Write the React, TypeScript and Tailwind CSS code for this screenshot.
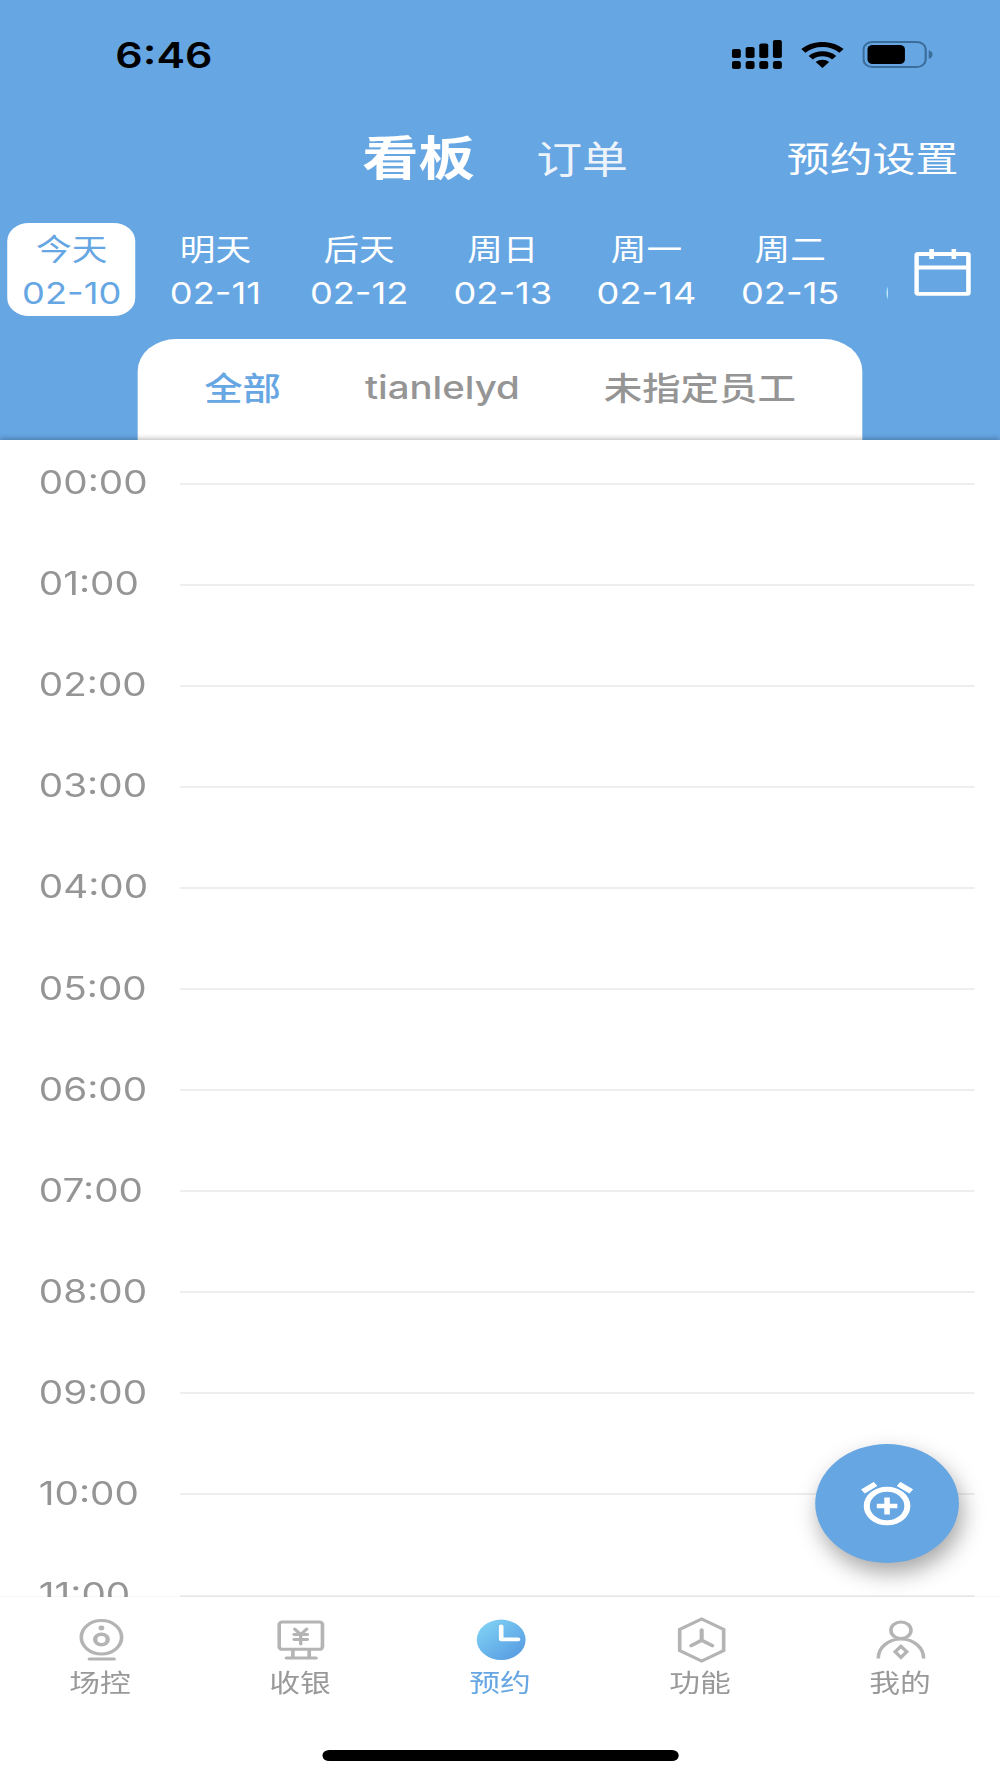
import React from 'react';
import clsx from 'clsx';

const DAYS = [
  { label: '今天', date: '02-10' },
  { label: '明天', date: '02-11' },
  { label: '后天', date: '02-12' },
  { label: '周日', date: '02-13' },
  { label: '周一', date: '02-14' },
  { label: '周二', date: '02-15' },
  { label: '周三', date: '02-16' },
];

const STAFF = ['全部', 'tianlelyd', '未指定员工'];

const HOURS = Array.from({ length: 12 }, (_, i) => `${String(i).padStart(2, '0')}:00`);

function SignalIcon() {
  const bars = [
    { x: 0, y: 9, h: 9 },
    { x: 11.4, y: 7, h: 11 },
    { x: 22.7, y: 3.5, h: 14.5 },
    { x: 34, y: 0, h: 18 },
  ];
  return (
    <svg className="h-[29px] w-[42px]" viewBox="0 0 42 29">
      {bars.map((b) => (
        <g key={b.x}>
          <rect x={b.x} y={b.y} width="7.4" height={b.h} rx="1.8" />
          <rect x={b.x} y="21" width="7.4" height="8" rx="2" />
        </g>
      ))}
    </svg>
  );
}

function WifiIcon() {
  return (
    <svg className="h-[26px] w-9" viewBox="0 0 36 26" fill="none" stroke="#000" strokeWidth="5">
      <path d="M2.2 8.9A22.6 22.6 0 0 1 33.8 8.9" />
      <path d="M8.3 15.700A14 14 0 0 1 27.7 15.700" />
      <path d="M18 26l-5.6-5.9a8 8 0 0 1 11.2 0z" fill="#000" stroke="none" />
    </svg>
  );
}

function BatteryIcon() {
  return (
    <svg className="h-[27px] w-[59px]" viewBox="0 0 59 27">
      <rect x="1" y="1" width="51.5" height="25" rx="7.5" fill="none" stroke="#3b6d9b" strokeWidth="1.8" />
      <rect x="4.3" y="4" width="31" height="19" rx="4.2" />
      <path d="M55 9.2c4.2 1.2 4.2 7.4 0 8.6z" fill="#3b6d9b" />
    </svg>
  );
}

function CalendarIcon() {
  return (
    <svg className="h-[47px] w-[47px]" viewBox="0 0 47 47" fill="none" stroke="#fff" strokeWidth="3.8">
      <rect x="1.9" y="5" width="43" height="39.8" rx="1" />
      <path d="M2 18.5h43M14.4 0v10M32.8 0v10" />
    </svg>
  );
}

function AlarmAddIcon() {
  return (
    <svg className="mr-px h-11 w-[43px]" viewBox="0 0 43 44" fill="none" stroke="#fff">
      <circle cx="21.5" cy="24" r="16.8" strokeWidth="5" />
      <path d="M1.5 9.5 12 2M41.5 9.5 31 2" strokeWidth="5.2" />
      <path d="M13 24h17M21.5 15.5v17" strokeWidth="4.6" />
    </svg>
  );
}

function CameraIcon() {
  return (
    <svg className="h-[46px] w-[42px]" viewBox="0 0 42 46" fill="none" stroke="#b4b4b4" strokeWidth="3">
      <circle cx="21" cy="20.3" r="16.7" />
      <circle cx="21" cy="22.5" r="5.2" strokeWidth="3.6" />
      <circle cx="21" cy="11" r="2.4" fill="#b4b4b4" stroke="none" />
      <path d="M11 42h20.5" strokeLinecap="round" />
    </svg>
  );
}

function CashierIcon() {
  return (
    <svg className="h-[46px] w-[42px]" viewBox="0 0 42 46" fill="none" stroke="#b4b4b4" strokeWidth="3" strokeLinecap="round">
      <rect x="3.2" y="5" width="35.8" height="27.3" rx="2.5" />
      <path d="M14.5 33v8M28 33v8M9.2 41h24.5" />
      <path d="m16 12 5 5.5 5-5.5M15.5 17.5h11M15.5 22.5h11M21 18v9" strokeWidth="2.8" />
    </svg>
  );
}

function ClockIcon() {
  return (
    <svg className="h-[46px] w-[42px]" viewBox="0 0 42 46">
      <defs>
        <linearGradient id="clock" x1="0.15" y1="0.15" x2="0.8" y2="0.9">
          <stop offset="0" stopColor="#7ccdf3" />
          <stop offset="1" stopColor="#5a9fe3" />
        </linearGradient>
      </defs>
      <circle cx="21" cy="22.8" r="20.2" fill="url(#clock)" />
      <path d="M21 9.500v12.800h14" fill="none" stroke="#fff" strokeWidth="3.8" strokeLinecap="round" strokeLinejoin="round" />
    </svg>
  );
}

function HexagonIcon() {
  return (
    <svg className="h-[46px] w-[42px]" viewBox="0 0 42 46" fill="none" stroke="#b4b4b4" strokeWidth="3">
      <path d="M21 2 39.2 12.4v21.2L21 44 2.8 33.6V12.4z" />
      <path d="M21 13v10.200M21 23.200l-8.6 5.400M21 23.200l8.8 5.400" strokeWidth="3.4" strokeLinecap="round" />
    </svg>
  );
}

function ProfileIcon() {
  return (
    <svg className="h-[46px] w-[42px]" viewBox="0 0 42 46" fill="none" stroke="#b4b4b4" strokeWidth="3">
      <circle cx="21" cy="13.2" r="8.3" />
      <path d="M2.2 41.500c0-11 8.4-19.5 18.8-19.5S39.8 30.500 39.8 41.500" />
      <path d="m21 29.2 4.8 5.6-4.8 5.6-4.8-5.6z" />
    </svg>
  );
}

const TABS = [
  { label: '场控', icon: CameraIcon },
  { label: '收银', icon: CashierIcon },
  { label: '预约', icon: ClockIcon },
  { label: '功能', icon: HexagonIcon },
  { label: '我的', icon: ProfileIcon },
];

function StatusBar() {
  return (
    <div className="flex h-[110px] items-center pr-[55.5px] pl-[95.5px] text-black">
      <span className="pt-px text-[35.5px] leading-none font-semibold">6:46</span>
      <div className="mb-px ml-auto flex items-center">
        <SignalIcon />
        <div className="ml-[15px]">
          <WifiIcon />
        </div>
        <div className="ml-[15px]">
          <BatteryIcon />
        </div>
      </div>
    </div>
  );
}

function Header() {
  return (
    <header className="h-[440px] bg-[#65a6e3] text-white">
      <StatusBar />

      <nav className="flex h-24 items-center pl-[300px]">
        <span className="text-[46.5px] leading-none font-bold">看板</span>
        <span className="ml-[51px] pt-[2px] text-[38px] leading-none text-[#edf3fb]">订单</span>
        <span className="mr-[34.5px] ml-auto pt-[3px] text-[35.5px] leading-none">预约设置</span>
      </nav>

      {/* date strip */}
      <div className="flex pt-[17px]">
        <div className="flex w-[734.5px] shrink-0 overflow-hidden">
          {DAYS.map((day, i) => (
            <div
              key={day.date}
              className={clsx(
                'mr-[6.6px] ml-[6.4px] flex h-[93px] w-[106px] shrink-0 flex-col items-center rounded-[18px] pt-[8px]',
                i === 0 && 'bg-white text-[#65a6e3]'
              )}
            >
              <span className="text-[29.5px] leading-[36px]">{day.label}</span>
              <span className="mt-[4px] text-[30px] leading-[44px]">{day.date}</span>
            </div>
          ))}
        </div>
        <div className="ml-[22.5px] pt-[25.5px]">
          <CalendarIcon />
        </div>
      </div>

      {/* staff filter */}
      <div className="mt-[23px] ml-[113.6px] flex h-[101px] w-[600.8px] items-center justify-center gap-[69.5px] rounded-t-[32px] bg-white pb-[3px] text-[31.8px] leading-none font-medium text-[#959595]">
        {STAFF.map((name, i) => (
          <span key={name} className={clsx(i === 0 && 'text-[#65a6e3]', i !== 1 && 'pt-[2px]')}>
            {name}
          </span>
        ))}
      </div>
    </header>
  );
}

function Timeline() {
  return (
    <main className="relative h-[1157px] bg-white shadow-[0_-1px_5px_rgba(0,0,0,0.3)]">
      <div className="h-full overflow-hidden pr-[21px] pl-[32.2px]">
        {HOURS.map((hour, i) => (
          <div key={hour} className={clsx('flex h-[101.1px] items-center', i === 0 && '-mt-[7px]')}>
            <span className="w-[116.8px] pb-px text-[32px] leading-none text-[#959595]">{hour}</span>
            <span className="h-[2px] flex-1 bg-[#eeeeee]" />
          </div>
        ))}
      </div>
      <button className="absolute right-[34px] bottom-[34px] flex size-[119px] items-center justify-center rounded-full bg-[#65a6e3] shadow-[3px_10px_20px_rgba(0,0,0,0.35)]">
        <AlarmAddIcon />
      </button>
    </main>
  );
}

function TabBar() {
  return (
    <footer className="relative flex h-[181px] flex-col bg-white shadow-[0_-1px_0_rgba(0,0,0,0.03)]">
      <div className="flex pt-[20px]">
        {TABS.map(({ label, icon: Icon }, i) => (
          <div
            key={label}
            className={clsx('flex flex-1 flex-col items-center', i === 2 ? 'text-[#65a6e3]' : 'text-[#999999]')}
          >
            <div className="pl-[2px]">
              <Icon />
            </div>
            <span className="mt-[4px] text-[25.5px] leading-[32px]">{label}</span>
          </div>
        ))}
      </div>
      <div className="mt-auto mb-[17px] h-[11px] w-[295px] self-center rounded-full bg-black" />
    </footer>
  );
}

// The 828px wide phone canvas is widened to fill the 1000px frame.
export default function App() {
  return (
    <div className="h-[1778px] w-[1000px] overflow-hidden bg-white">
      <div className="h-[1778px] w-[828px] origin-top-left scale-x-[1.2077] font-['Inter','Noto_Sans_CJK_SC',sans-serif]">
        <Header />
        <Timeline />
        <TabBar />
      </div>
    </div>
  );
}
